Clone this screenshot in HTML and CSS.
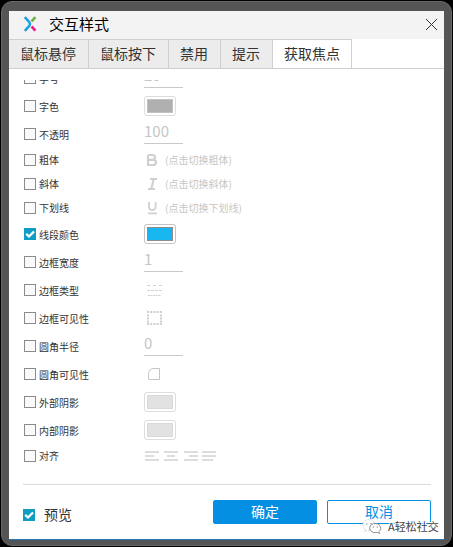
FILE: index.html
```html
<!DOCTYPE html>
<html lang="zh-CN">
<head>
<meta charset="utf-8">
<title>交互样式</title>
<link rel="stylesheet" href="styles.css">
</head>
<body>
<div class="frame">
<div class="dialog">
  <header class="titlebar">
    <svg class="logo" width="14" height="16" viewBox="0 0 14 16" fill="none" stroke-width="2.6">
      <path d="M1.8 1.2L6.4 6.2Q7.7 8 6.4 9.8L1.8 14.8" stroke="#1ba1e2"/>
      <path d="M8.6 5.3L12.4 1.2" stroke="#6cb33f"/>
      <path d="M8.6 10.5L12.4 14.6" stroke="#ec1c8e"/>
    </svg>
    <h1 class="title">交互样式</h1>
    <svg class="close" width="13" height="13" viewBox="0 0 13 13" stroke="#333" stroke-width="1"><path d="M1 1L12 12M12 1L1 12"/></svg>
  </header>
  <nav class="tabs">
    <span class="tab">鼠标悬停</span><span class="tab">鼠标按下</span><span class="tab">禁用</span><span class="tab">提示</span><span class="tab active">获取焦点</span>
  </nav>
  <main class="list">
    <div class="row"><i class="check"></i><span class="label">字号</span><span class="field">20</span></div>
    <div class="row"><i class="check"></i><span class="label">字色</span><span class="swatch"><i class="gray"></i></span></div>
    <div class="row"><i class="check"></i><span class="label">不透明</span><span class="field">100</span></div>
    <div class="row short"><i class="check"></i><span class="label">粗体</span><svg class="glyph" width="16" height="14" viewBox="0 0 16 14" fill="none" stroke="#d0d0d0" stroke-width="2.2"><path d="M4 2H8.5Q11 2 11 4.4T8.5 6.8H4M4 6.8H9Q12 6.8 12 9.4T9 12H4V2"/></svg><span class="hint">(点击切换粗体)</span></div>
    <div class="row short"><i class="check"></i><span class="label">斜体</span><svg class="glyph" width="16" height="14" viewBox="0 0 16 14" fill="none" stroke="#d0d0d0" stroke-width="2"><path d="M6 2H13M4 12H11M9.7 2L7.3 12"/></svg><span class="hint">(点击切换斜体)</span></div>
    <div class="row short"><i class="check"></i><span class="label">下划线</span><svg class="glyph" width="16" height="14" viewBox="0 0 16 14" fill="none" stroke="#d0d0d0" stroke-width="1.8"><path d="M5 1V5.5Q5 9 8.3 9T11.6 5.5V1M4 12.4H13"/></svg><span class="hint">(点击切换下划线)</span></div>
    <div class="row"><i class="check on"><svg width="12" height="12" viewBox="0 0 12 12"><path d="M2.2 5.8L5 8.5L10 3.5"/></svg></i><span class="label">线段颜色</span><span class="swatch strong"><i class="blue"></i></span></div>
    <div class="row"><i class="check"></i><span class="label">边框宽度</span><span class="field">1</span></div>
    <div class="row"><i class="check"></i><span class="label">边框类型</span><svg class="glyph" width="20" height="16" viewBox="0 0 20 16" stroke="#d2d2d2" stroke-width="1"><path d="M3 3.5H18" stroke-dasharray="3 3"/><path d="M3 8.5H18" stroke-dasharray="3 1"/><path d="M4 13.5H17" stroke-dasharray="2 .5"/></svg></div>
    <div class="row"><i class="check"></i><span class="label">边框可见性</span><svg class="glyph" width="20" height="16" viewBox="0 0 20 16" fill="none" stroke="#cfcfcf" stroke-width="2"><path d="M3 2H18M3 14H18" stroke-dasharray="2 1.2"/><path d="M4 4.5V13M17 4.5V13" stroke-dasharray="2 1"/></svg></div>
    <div class="row"><i class="check"></i><span class="label">圆角半径</span><span class="field">0</span></div>
    <div class="row"><i class="check"></i><span class="label">圆角可见性</span><svg class="glyph" width="20" height="16" viewBox="0 0 20 16" fill="none" stroke="#c6c6c6"><path d="M4.5 13.5V7.5Q5 2.5 10 2.5H15.5V13.5Z"/></svg></div>
    <div class="row"><i class="check"></i><span class="label">外部阴影</span><span class="swatch"><i class="pale"></i></span></div>
    <div class="row"><i class="check"></i><span class="label">内部阴影</span><span class="swatch"><i class="pale"></i></span></div>
    <div class="row short"><i class="check"></i><span class="label">对齐</span><svg class="glyph" width="74" height="12" viewBox="0 0 74 12" stroke="#d2d2d2" stroke-width="1.7"><path d="M1 2H15M1 6H10M1 10H15M20 2H34M23 6H31M20 10H34M40 2H54M45 6H54M40 10H54M58 2H72M58 6H72M58 10H69"/></svg></div>
  </main>
  <footer class="footer">
    <i class="check on"><svg width="12" height="12" viewBox="0 0 12 12"><path d="M2.2 5.8L5 8.5L10 3.5"/></svg></i>
    <span class="preview">预览</span>
    <button class="button primary">确定</button>
    <button class="button">取消</button>
  </footer>
  <div class="watermark">
    <svg width="22" height="18" viewBox="0 0 22 18" fill="#fff" stroke="#777" stroke-width=".8">
      <path d="M4.5 12.5L3.5 14.5L6.5 13.2Q10 13.5 13 11Q15 7.5 12.5 4.5Q9.5 1.5 5.5 3Q1 5 2 9Q2.5 11 4.5 12.5Z" stroke="#ccc" stroke-dasharray="2 1"/>
      <path d="M18 14.5L18.5 16.5L16 15.4Q12 16.5 9.5 13.8Q7.5 11 9.7 8.2Q12.5 5.6 16.5 6.8Q20 8.5 19.8 11.5Q19.5 13.5 18 14.5Z"/>
      <path d="M5.8 6.5V7.5M10 6V7M12.3 9.5V10.5M16.3 9.5V10.5" stroke-width="1.2"/>
    </svg>
    <span>A轻松社交</span>
  </div>
</div>
</div>
</body>
</html>
```

FILE: styles.css
```css
* { box-sizing: border-box; }
body {
  margin: 0;
  padding: 1px;
  width: 453px;
  height: 547px;
  overflow: hidden;
  background: #000;
  font-family: "Noto Sans CJK SC", sans-serif;
  color: #333;
}
.frame {
  width: 451px;
  height: 545px;
  padding: 9px 7px 5px;
  border: 1px solid #686868;
  border-radius: 11px;
  background: #555;
}
.dialog {
  position: relative;
  display: flex;
  flex-direction: column;
  width: 435px;
  height: 529px;
  background: #fff;
  border-bottom: 1px solid #2878b8;
}
.titlebar {
  display: flex;
  align-items: center;
  flex: none;
  height: 28px;
  padding: 0 6px 0 14px;
  background: #f3f3f3;
}
.logo { margin-top: -2px; }
.close { margin-top: -2px; }
.title {
  flex: 1;
  margin: -3px 0 0 12px;
  font-size: 15px;
  line-height: 28px;
  font-weight: 400;
  color: #000;
}
.tabs {
  display: flex;
  flex: none;
  height: 30px;
  border-bottom: 1px solid #cfcfcf;
}
.tab {
  height: 30px;
  padding: 0 12px 0 11px;
  border: 1px solid #cfcfcf;
  border-left: 0;
  background: #ececec;
  font-size: 14px;
  line-height: 27px;
}
.tab.active { padding: 0 11px; background: #fff; }
.list {
  flex: none;
  height: 389px;
  margin-top: 11px;
  padding-left: 15px;
  overflow: hidden;
}
.row {
  display: flex;
  align-items: center;
  height: 28px;
}
.row:first-child { margin-top: -16px; }
.row.short { height: 24px; }
.check {
  flex: none;
  width: 12px;
  height: 12px;
  border: 1px solid #8b8b8b;
  background: #fafafa;
}
.check.on { border: 0; background: #0f9dc4; }
.check svg {
  display: block;
  fill: none;
  stroke: #fff;
  stroke-width: 2.3;
}
.label {
  width: 105px;
  padding: 2px 0 0 3px;
  margin-right: 3px;
  font-size: 10px;
  line-height: 14px;
}
.short .label { padding-top: 0; }
.field {
  width: 39px;
  height: 24px;
  border-bottom: 1px solid #cacaca;
  align-self: flex-start;
  font-size: 15px;
  line-height: 22px;
  color: #c6c6c6;
}
.swatch {
  width: 32px;
  height: 20px;
  padding: 2px;
  border: 1px solid #ddd;
  border-radius: 3px;
}
.swatch.strong { border-color: #c4c4c4; }
.swatch i {
  display: block;
  width: 26px;
  height: 14px;
  border: 1px solid #c2c2c2;
}
.gray { background: #b0b0b0; }
.swatch .blue { background: #19b7f0; border-color: #8c8c8c; }
.swatch .pale { background: #e2e2e2; border-color: #d9d9d9; }
.hint {
  margin-left: 5px;
  font-size: 10px;
  line-height: 14px;
  color: #c6c6c6;
}
.footer {
  display: flex;
  align-items: center;
  height: 55px;
  flex: none;
  margin: 15px 13px 0 14px;
  border-top: 1px solid #dcdcdc;
}
.footer .check { margin-top: 5px; }
.preview {
  flex: 1;
  margin: 4px 0 0 9px;
  font-size: 14px;
  line-height: 20px;
}
.button {
  width: 104px;
  height: 24px;
  padding: 0 0 2px;
  border: 1px solid #058fe3;
  border-radius: 2px;
  background: #fff;
  color: #058fe3;
  font: 14px/20px "Noto Sans CJK SC", sans-serif;
}
.button.primary { background: #058fe3; color: #fff; margin-right: 10px; }
.watermark {
  position: absolute;
  left: 352px;
  top: 506px;
  display: flex;
  align-items: center;
  gap: 5px;
  font-size: 11px;
  line-height: 18px;
  white-space: nowrap;
  color: #444;
  text-shadow: 1px 1px #fff, -1px -1px #fff, 1px -1px #fff, -1px 1px #fff;
}
```
